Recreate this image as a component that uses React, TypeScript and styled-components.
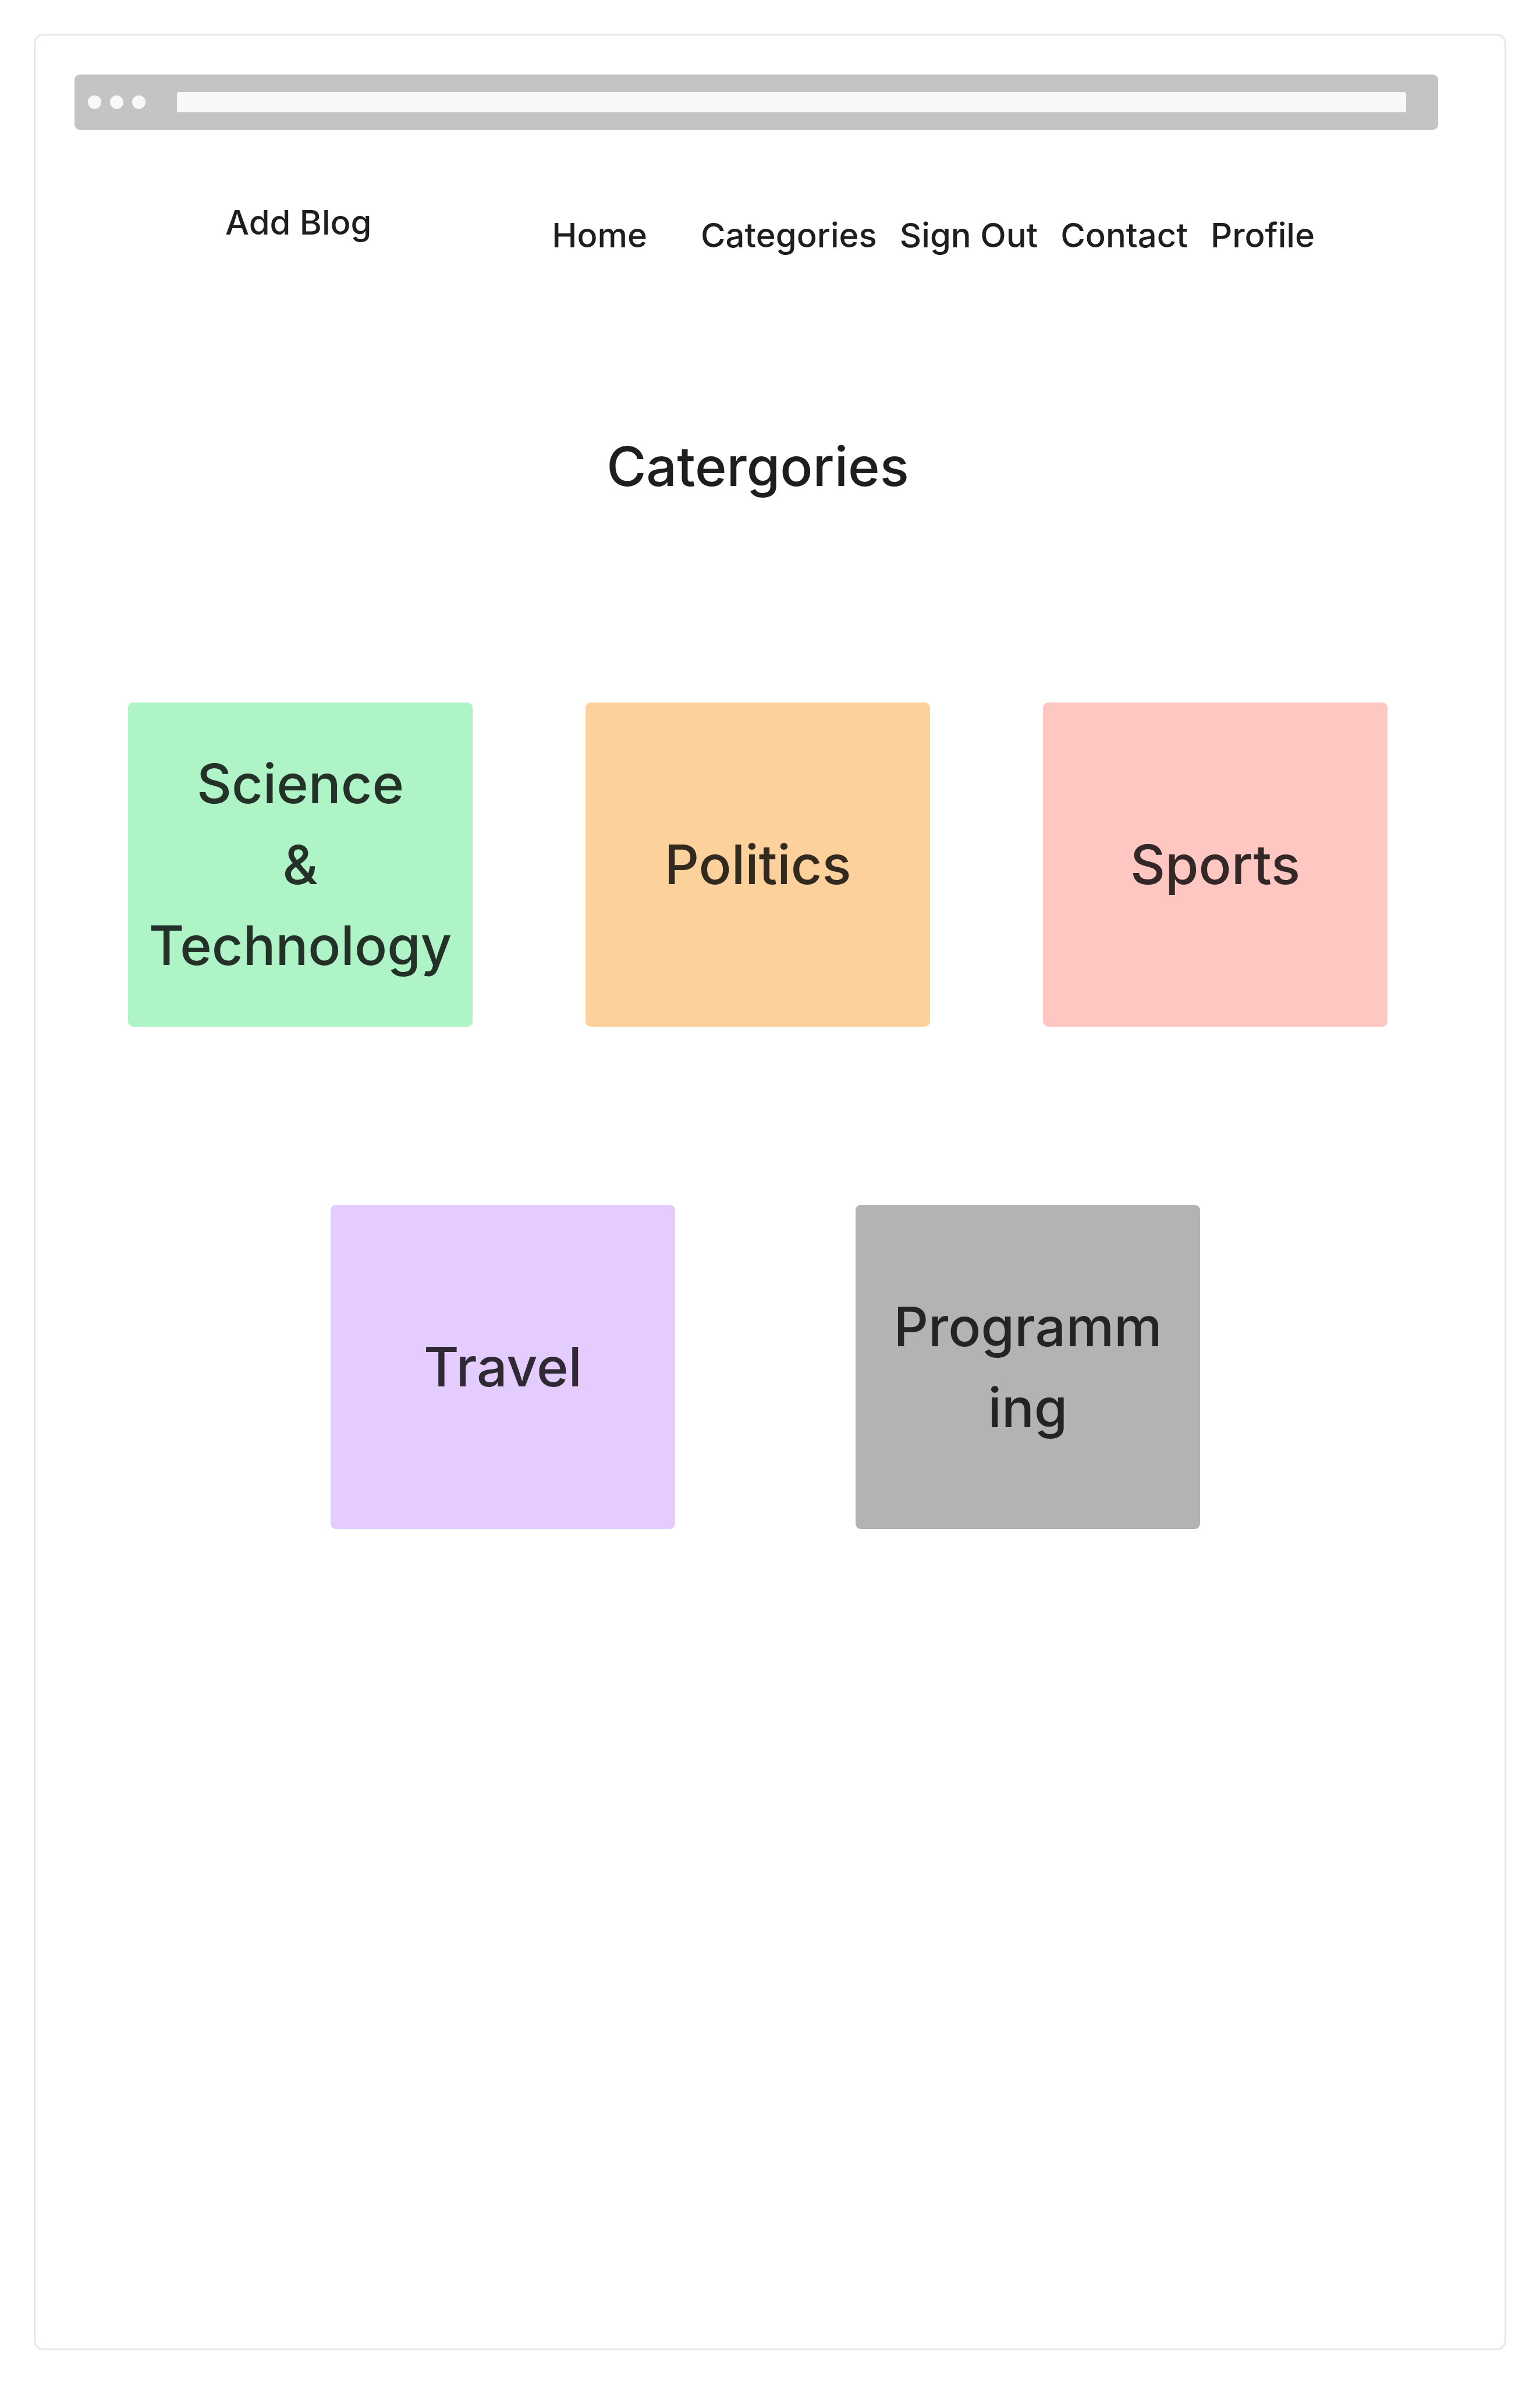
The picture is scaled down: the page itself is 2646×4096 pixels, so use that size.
import React from "react";
import styled, { createGlobalStyle } from "styled-components";

const GlobalStyle = createGlobalStyle`
  *, *::before, *::after { box-sizing: border-box; }
  body {
    margin: 0;
    background: #ffffff;
    color: #1e1e1e;
    font-family: Inter, "Liberation Sans", sans-serif;
    font-weight: 500;
  }
`;

const Page = styled.div`
  display: flex;
  min-height: 100vh;
  padding: 58px;
`;

const Frame = styled.div`
  flex: 1;
  min-width: 0;
  padding: 67px 0;
  border: 3px solid #e6e6e6;
  border-radius: 17px;
`;

const BrowserBar = styled.div`
  display: flex;
  align-items: center;
  height: 95px;
  margin: 0 114px 0 67px;
  padding: 0 55px 0 23px;
  border-radius: 9px;
  background: #c4c4c4;
`;

const Dots = styled.div`
  display: flex;
  gap: 15px;
  margin-right: 54px;
`;

const Dot = styled.span`
  width: 23px;
  height: 23px;
  border-radius: 50%;
  background: #f8f8f8;
`;

const AddressField = styled.input`
  flex: 1;
  min-width: 0;
  height: 35px;
  padding: 0 12px;
  border: 0;
  border-radius: 4px;
  background: #f8f8f8;
  font: inherit;
  font-size: 24px;
`;

const Header = styled.header`
  display: flex;
  justify-content: space-between;
  margin-top: 116px;
  padding: 0 326px;
`;

const AddBlogButton = styled.button`
  align-self: flex-start;
  padding: 0;
  border: 0;
  background: none;
  color: inherit;
  font: inherit;
  font-size: 58px;
  line-height: 87px;
  white-space: nowrap;
  cursor: pointer;
`;

const Nav = styled.nav`
  display: flex;
  gap: 92px;
  padding-top: 22px;
`;

const NavGroup = styled.div`
  display: flex;
  gap: 39px;
`;

const NavLink = styled.a`
  color: inherit;
  font-size: 58px;
  line-height: 87px;
  text-decoration: none;
  white-space: nowrap;
`;

const Main = styled.main`
  padding: 284px 201px 0 159px;
`;

const Title = styled.h1`
  margin: 0 0 336px;
  font-size: 93px;
  font-weight: 500;
  line-height: 139px;
  text-align: center;
`;

const CardRow = styled.div<{ $columns: number; $gap: number }>`
  display: grid;
  grid-template-columns: repeat(${(p) => p.$columns}, minmax(0, 1fr));
  gap: ${(p) => p.$gap}px;
`;

const SecondRow = styled(CardRow)`
  margin-top: 306px;
  padding: 0 322px 0 348px;
`;

const Card = styled.a<{ $color: string }>`
  display: flex;
  align-items: center;
  justify-content: center;
  min-height: 557px;
  border-radius: 9px;
  background: ${(p) => p.$color};
  color: rgba(0, 0, 0, 0.8);
  font-size: 93px;
  line-height: 139px;
  text-align: center;
  text-decoration: none;
  white-space: pre-line;
`;

const links = ["Categories", "Sign Out", "Contact", "Profile"];

const firstRow = [
  { label: "Science\n&\nTechnology", color: "#aff4c6" },
  { label: "Politics", color: "#fcd19c" },
  { label: "Sports", color: "#ffc7c2" },
];

const secondRow = [
  { label: "Travel", color: "#e4ccff" },
  { label: "Programm\ning", color: "#b3b3b3" },
];

export default function App() {
  return (
    <Page>
      <GlobalStyle />
      <Frame>
        <BrowserBar>
          <Dots>
            <Dot />
            <Dot />
            <Dot />
          </Dots>
          <AddressField type="text" aria-label="Address" />
        </BrowserBar>
        <Header>
          <AddBlogButton type="button">Add Blog</AddBlogButton>
          <Nav>
            <NavLink href="#home">Home</NavLink>
            <NavGroup>
              {links.map((link) => (
                <NavLink key={link} href="#">
                  {link}
                </NavLink>
              ))}
            </NavGroup>
          </Nav>
        </Header>
        <Main>
          <Title>Catergories</Title>
          <CardRow $columns={3} $gap={194}>
            {firstRow.map((card) => (
              <Card key={card.label} href="#" $color={card.color}>
                {card.label}
              </Card>
            ))}
          </CardRow>
          <SecondRow $columns={2} $gap={310}>
            {secondRow.map((card) => (
              <Card key={card.label} href="#" $color={card.color}>
                {card.label}
              </Card>
            ))}
          </SecondRow>
        </Main>
      </Frame>
    </Page>
  );
}
